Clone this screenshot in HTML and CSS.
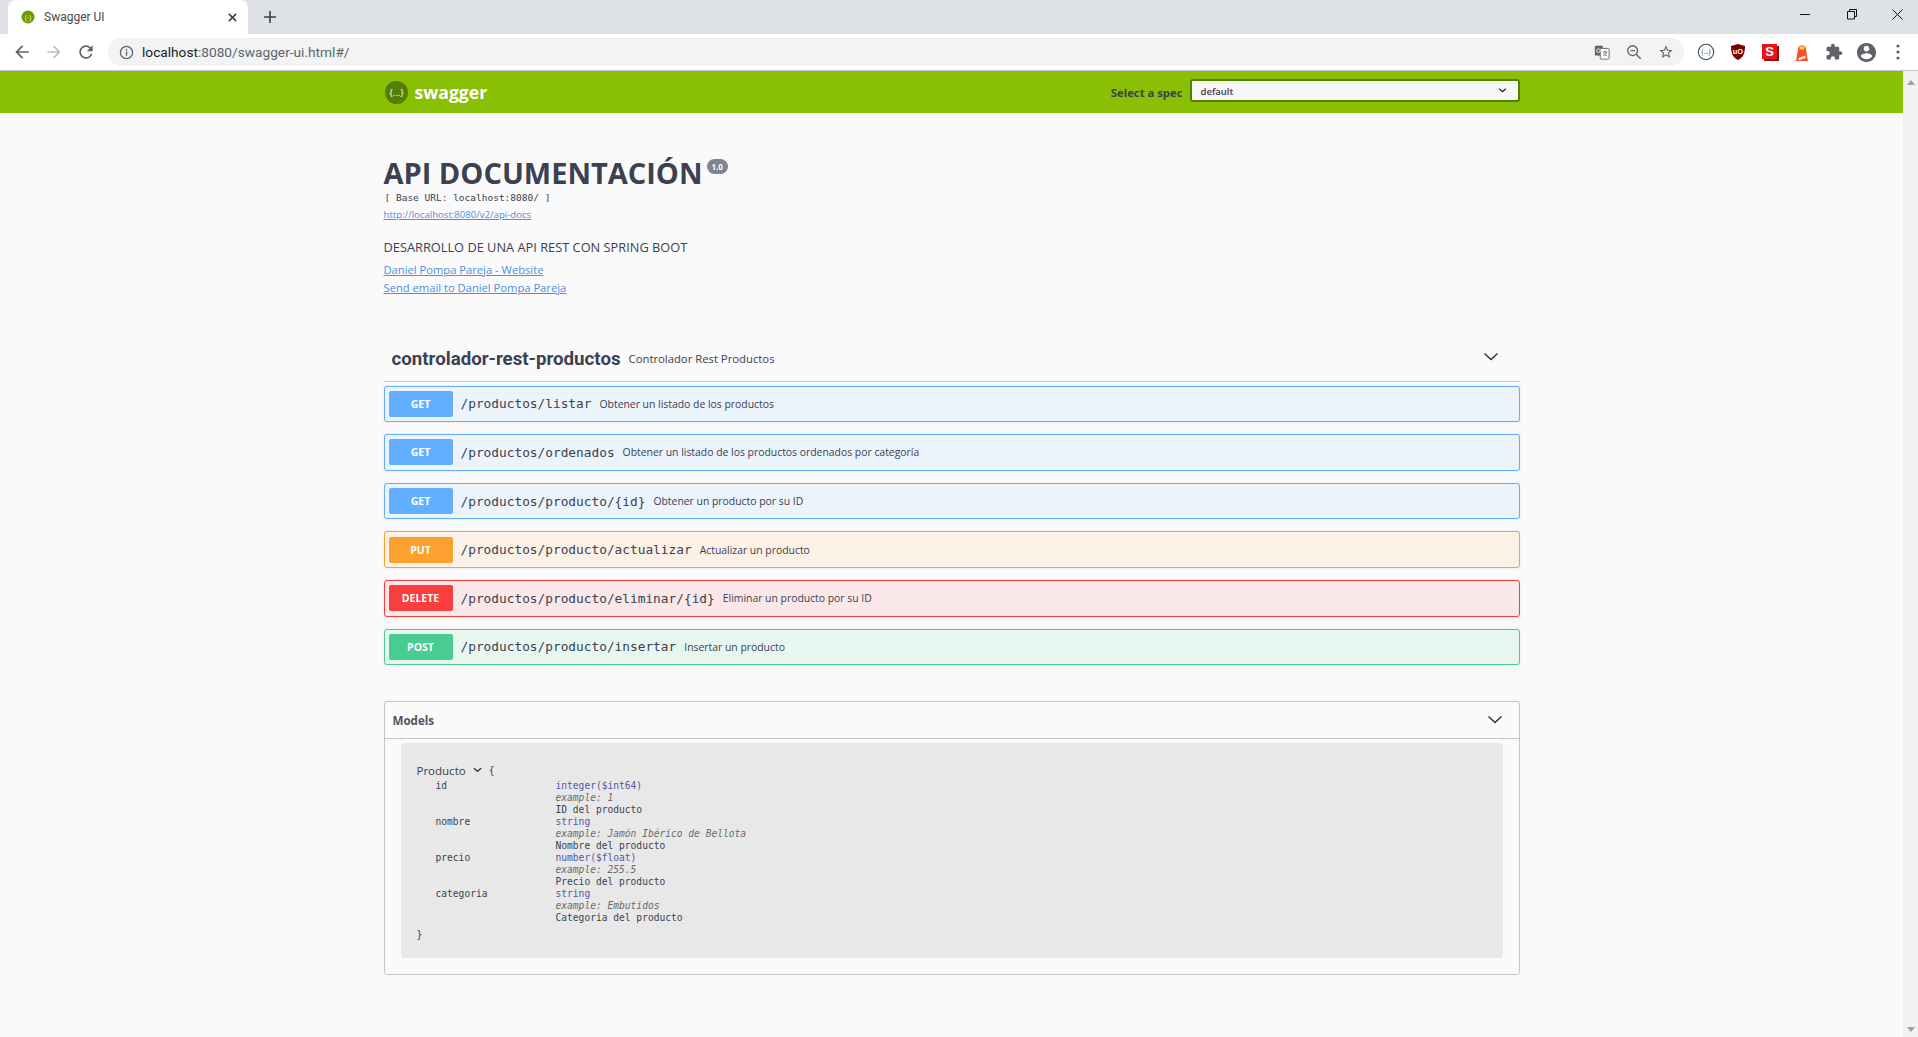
FILE: index.html
```html
<!DOCTYPE html>
<html lang="es">
<head>
<meta charset="utf-8">
<title>Swagger UI</title>
<link rel="stylesheet" href="styles.css">
</head>
<body>
<header class="browser">
  <div class="tabstrip">
    <div class="tab">
      <svg class="favicon" viewBox="0 0 14 14"><circle cx="7" cy="7" r="6.5" fill="#6d9a04"/><text x="7" y="9.500" class="favicon-text">{·}</text></svg>
      <span class="tab-title">Swagger UI</span>
      <svg class="tab-close" viewBox="0 0 10 10"><path d="M1 1l8 8M9 1l-8 8" stroke="#3c4043" stroke-width="1.7" fill="none"/></svg>
    </div>
    <svg class="tab-new" viewBox="0 0 12 12"><path d="M6 0v12M0 6h12" stroke="#3c4043" stroke-width="1.6" fill="none"/></svg>
    <div class="win-controls">
      <svg class="win-btn" viewBox="0 0 46 16"><path d="M18 8.5h10" stroke="#111" fill="none"/></svg>
      <svg class="win-btn" viewBox="0 0 46 16"><path d="M19.5 5.5h7v7.500h-7zM21.500 5.500v-2h7v7h-2" stroke="#111" fill="none"/></svg>
      <svg class="win-btn" viewBox="0 0 46 16"><path d="M18.500 3.500l10 10M28.500 3.500l-10 10" stroke="#111" fill="none"/></svg>
    </div>
  </div>
  <div class="toolbar">
    <svg class="nav-icon" viewBox="0 0 24 24"><path fill="#5f6368" d="M20 11H7.830l5.590-5.590L12 4l-8 8 8 8 1.410-1.410L7.830 13H20v-2z"/></svg>
    <svg class="nav-icon" viewBox="0 0 24 24"><path fill="#bcc0c4" d="M4 11h12.170l-5.590-5.590L12 4l8 8-8 8-1.410-1.410L16.170 13H4v-2z"/></svg>
    <svg class="nav-icon" viewBox="0 0 24 24"><path fill="#5f6368" d="M17.650 6.350A7.958 7.958 0 0012 4c-4.420 0-7.990 3.580-7.990 8s3.570 8 7.990 8c3.730 0 6.840-2.550 7.730-6h-2.080A5.990 5.990 0 0112 18c-3.310 0-6-2.690-6-6s2.690-6 6-6c1.660 0 3.140.690 4.220 1.780L13 11h7V4l-2.350 2.350z"/></svg>
    <div class="omnibox">
      <svg class="info-icon" viewBox="0 0 16 16"><circle cx="8" cy="8" r="6.500" fill="none" stroke="#5f6368" stroke-width="1.400"/><path d="M8 7v4.500M8 4.300v1.500" stroke="#5f6368" stroke-width="1.500" fill="none"/></svg>
      <span class="url"><span class="url-host">localhost</span>:8080/swagger-ui.html#/</span>
      <div class="omni-actions">
        <svg class="omni-icon" viewBox="0 0 18 18"><rect x="1" y="2" width="9" height="11" rx="1" fill="#5f6368"/><rect x="7" y="5" width="10" height="12" rx="1" fill="#fff" stroke="#5f6368"/><circle cx="5" cy="7.500" r="2" fill="none" stroke="#fff"/><path d="M10 9h5M12.500 8v1M14 9c-.5 2-2 3.500-3.500 4M11 10.500c.8 1.300 2 2.200 3.500 2.800" stroke="#5f6368" fill="none"/></svg>
        <svg class="omni-icon" viewBox="0 0 18 18"><circle cx="7.500" cy="7.500" r="5.500" fill="none" stroke="#5f6368" stroke-width="1.500"/><path d="M5 7.500h5M11.500 11.500l5 5" stroke="#5f6368" stroke-width="1.500" fill="none"/></svg>
        <svg class="omni-icon" viewBox="0 0 24 24"><path fill="#5f6368" d="M22 9.240l-7.190-.62L12 2 9.190 8.630 2 9.240l5.460 4.730L5.820 21 12 17.270 18.180 21l-1.630-7.030L22 9.240zM12 15.400l-3.760 2.270 1-4.280-3.320-2.880 4.380-.38L12 6.100l1.710 4.040 4.380.38-3.320 2.880 1 4.280L12 15.400z"/></svg>
      </div>
    </div>
    <div class="extensions">
      <svg class="ext-icon" viewBox="0 0 18 18"><circle cx="9" cy="9" r="7.700" fill="#fff" stroke="#4a4a4a" stroke-width="1.100"/><text x="9" y="11.300" class="ext-swagger-text">{...}</text></svg>
      <svg class="ext-icon" viewBox="0 0 18 18"><path d="M9 1l7 2c0 7-1.500 11.500-7 14C3.500 14.500 2 10 2 3z" fill="#800000"/><text x="9" y="11" class="ext-ub-text">uO</text></svg>
      <svg class="ext-icon" viewBox="0 0 18 18"><rect x="3" y="3" width="15" height="15" fill="#8e0f12"/><rect x="1" y="1" width="15" height="15" fill="#e8141c"/><text x="8.500" y="13" class="ext-s-text">S</text></svg>
      <svg class="ext-icon" viewBox="0 0 14 18"><path d="M3 7h8l2 11H1z" fill="#f4502a"/><path d="M2.500 7a4.500 4.500 0 019 0z" fill="#f4502a"/><rect x="4.500" y="3.500" width="5" height="3" fill="#fbd04a"/><path d="M3.500 15l7-2.500v2.500l-7 2.500z" fill="#fde3d8"/></svg>
      <svg class="ext-icon" viewBox="0 0 24 24"><path fill="#5f6368" d="M20.500 11H19V7c0-1.100-.9-2-2-2h-4V3.500C13 2.120 11.880 1 10.500 1S8 2.120 8 3.500V5H4c-1.100 0-1.990.9-1.990 2v3.800H3.500c1.490 0 2.700 1.210 2.700 2.700s-1.210 2.700-2.700 2.700H2V20c0 1.100.9 2 2 2h3.800v-1.500c0-1.490 1.210-2.700 2.700-2.700 1.490 0 2.700 1.210 2.700 2.700V22H17c1.100 0 2-.9 2-2v-4h1.500c1.380 0 2.500-1.120 2.500-2.500S21.880 11 20.500 11z"/></svg>
      <svg class="ext-icon ext-large" viewBox="2 2 20 20"><path fill="#5f6368" d="M12 2C6.480 2 2 6.480 2 12s4.480 10 10 10 10-4.480 10-10S17.520 2 12 2zm0 3c1.660 0 3 1.340 3 3s-1.340 3-3 3-3-1.340-3-3 1.340-3 3-3zm0 14.200c-2.500 0-4.710-1.280-6-3.220.03-1.990 4-3.080 6-3.080 1.990 0 5.970 1.090 6 3.080-1.290 1.940-3.500 3.220-6 3.220z"/></svg>
      <svg class="ext-icon" viewBox="0 0 18 18"><circle cx="9" cy="3" r="1.600" fill="#5f6368"/><circle cx="9" cy="9" r="1.600" fill="#5f6368"/><circle cx="9" cy="15" r="1.600" fill="#5f6368"/></svg>
    </div>
  </div>
</header>

<div class="viewport">
  <main class="page">
    <div class="topbar">
      <div class="wrap topbar-inner">
        <a class="logo">
          <svg class="logo-mark" viewBox="0 0 23 23"><circle cx="11.500" cy="11.500" r="11.500" fill="#547f00"/><text x="11.500" y="14.800" class="logo-mark-text">{...}</text></svg>
          <span class="logo-text">swagger</span>
        </a>
        <label class="spec-label">Select a spec</label>
        <div class="spec-select">
          <span>default</span>
          <svg class="spec-chevron" viewBox="0 0 10 6"><path d="M1 1l4 3.500L9 1" fill="none" stroke="#222" stroke-width="1.500"/></svg>
        </div>
      </div>
    </div>

    <div class="wrap">
      <section class="info">
        <h1 class="title">API DOCUMENTACIÓN<span class="version">1.0</span></h1>
        <p class="base-url">[ Base URL: localhost:8080/ ]</p>
        <a class="spec-link">http://localhost:8080/v2/api-docs</a>
        <p class="description">DESARROLLO DE UNA API REST CON SPRING BOOT</p>
        <a class="contact-link">Daniel Pompa Pareja - Website</a>
        <a class="contact-link">Send email to Daniel Pompa Pareja</a>
      </section>

      <section class="tag-section">
        <div class="tag-header">
          <span class="tag-name">controlador-rest-productos</span>
          <span class="tag-desc">Controlador Rest Productos</span>
          <svg class="tag-chevron" viewBox="0 0 14 8"><path d="M.5.500L7 6.500 13.500.500" fill="none" stroke="#303030" stroke-width="1.400"/></svg>
        </div>
        <div class="ops">
          <div class="op op-get"><span class="method">GET</span><span class="path">/productos/listar</span><span class="op-desc">Obtener un listado de los productos</span></div>
          <div class="op op-get"><span class="method">GET</span><span class="path">/productos/ordenados</span><span class="op-desc">Obtener un listado de los productos ordenados por categoría</span></div>
          <div class="op op-get"><span class="method">GET</span><span class="path">/productos/producto/{id}</span><span class="op-desc">Obtener un producto por su ID</span></div>
          <div class="op op-put"><span class="method">PUT</span><span class="path">/productos/producto/actualizar</span><span class="op-desc">Actualizar un producto</span></div>
          <div class="op op-delete"><span class="method">DELETE</span><span class="path">/productos/producto/eliminar/{id}</span><span class="op-desc">Eliminar un producto por su ID</span></div>
          <div class="op op-post"><span class="method">POST</span><span class="path">/productos/producto/insertar</span><span class="op-desc">Insertar un producto</span></div>
        </div>
      </section>

      <section class="models">
        <div class="models-header">
          <span class="models-title">Models</span>
          <svg class="models-chevron" viewBox="0 0 14 8"><path d="M.5.500L7 6.500 13.500.500" fill="none" stroke="#303030" stroke-width="1.400"/></svg>
        </div>
        <div class="model-box">
          <div class="model-head"><span class="model-name">Producto</span><svg class="model-chevron" viewBox="0 0 10 6"><path d="M1 1l4 3.500L9 1" fill="none" stroke="#333" stroke-width="1.500"/></svg><span class="brace">{</span></div>
          <div class="props">
            <div class="prop-name">id</div>
            <div class="prop-info"><div class="type">integer($int64)</div><div class="example">example: 1</div><div class="pdesc">ID del producto</div></div>
            <div class="prop-name">nombre</div>
            <div class="prop-info"><div class="type">string</div><div class="example">example: Jamón Ibérico de Bellota</div><div class="pdesc">Nombre del producto</div></div>
            <div class="prop-name">precio</div>
            <div class="prop-info"><div class="type">number($float)</div><div class="example">example: 255.5</div><div class="pdesc">Precio del producto</div></div>
            <div class="prop-name">categoria</div>
            <div class="prop-info"><div class="type">string</div><div class="example">example: Embutidos</div><div class="pdesc">Categoria del producto</div></div>
          </div>
          <div class="brace brace-end">}</div>
        </div>
      </section>
    </div>
  </main>
  <aside class="scrollbar">
    <span class="arrow-up"></span>
    <span class="arrow-down"></span>
  </aside>
</div>
</body>
</html>
```
FILE: styles.css
```css
* { box-sizing: border-box; }
html, body { margin: 0; height: 1037px; overflow: hidden; }
body { font-family: "Open Sans", sans-serif; background: #fafafa; color: #3b4151; }
p, h1 { margin: 0; }

/* browser chrome */
.browser { height: 71px; background: #fff; border-bottom: 1px solid #c6c8ca; }
.tabstrip { height: 34px; background: #dee1e6; display: flex; align-items: center; padding-left: 8px; }
.tab { width: 240px; height: 34px; background: #fff; border-radius: 8px 8px 0 0; display: flex; align-items: center; padding: 0 11px 0 13px; }
.favicon { width: 14px; height: 14px; }
.favicon-text { font: 7px "Open Sans", sans-serif; fill: #e6eec9; text-anchor: middle; }
.tab-title { font: 12px "Roboto", sans-serif; color: #45494d; margin-left: 9px; flex: 1; }
.tab-close { width: 9px; height: 9px; }
.tab-new { width: 12px; height: 12px; margin-left: 16px; }
.win-controls { margin-left: auto; display: flex; margin-right: -2px; }
.win-btn { width: 46px; height: 16px; display: block; margin-top: -6px; }
.toolbar { height: 36px; display: flex; align-items: center; padding-left: 12px; }
.nav-icon { width: 20px; height: 20px; margin-right: 12px; flex: none; }
.nav-icon:nth-of-type(3) { margin-right: 0; }
.omnibox { width: 1576px; height: 28px; margin-left: 12px; background: #f1f3f4; border-radius: 14px; display: flex; align-items: center; padding-left: 11px; }
.info-icon { width: 15px; height: 15px; }
.url { font: 13.700px "Roboto", sans-serif; color: #5f6368; margin-left: 8px; }
.url-host { color: #202124; }
.omni-actions { margin-left: auto; display: flex; gap: 16px; padding-right: 10px; }
.omni-icon { width: 16px; height: 16px; display: block; }
.extensions { display: flex; align-items: center; margin-left: 13px; gap: 14px; }
.ext-icon { width: 18px; height: 18px; display: block; flex: none; }
.ext-large { width: 19px; height: 19px; margin: 0 -.5px; }
.ext-swagger-text { font: 6.500px "Open Sans", sans-serif; fill: #444; text-anchor: middle; }
.ext-ub-text { font: bold 7.500px "Liberation Sans", sans-serif; fill: #fff; text-anchor: middle; }
.ext-s-text { font: bold 13px "Liberation Sans", sans-serif; fill: #fff; text-anchor: middle; }

/* page */
.viewport { display: flex; height: 966px; }
.page { flex: 1; min-width: 0; background: #fafafa; overflow: hidden; }
.scrollbar { width: 15px; background: #f1f1f1; display: flex; flex-direction: column; justify-content: space-between; align-items: center; padding: 9px 0 5px; }
.arrow-up { border: 4px solid transparent; border-top: 0; border-bottom: 5px solid #a3a3a3; }
.arrow-down { border: 4px solid transparent; border-bottom: 0; border-top: 5px solid #a3a3a3; }
.wrap { width: 1136px; margin: 0 auto; }

/* top bar */
.topbar { height: 42px; background: #89bf04; }
.topbar-inner { display: flex; align-items: center; height: 100%; padding-left: 1px; }
.logo { display: flex; align-items: center; }
.logo-mark { width: 23px; height: 23px; }
.logo-mark-text { font: 9.500px "Open Sans", sans-serif; fill: #fff; text-anchor: middle; }
.logo-text { font: 700 17.600px "Open Sans", sans-serif; color: #fff; margin-left: 7px; }
.spec-label { font: 700 11.300px "Open Sans", sans-serif; color: #3b4151; margin-left: auto; margin-right: 7px; }
.spec-select { width: 330px; height: 23px; background: #f7f7f7; border: 2px solid #547f00; border-radius: 3px; font: 600 9.500px "Open Sans", sans-serif; color: #3b4151; display: flex; align-items: center; justify-content: space-between; padding: 0 11px 0 9px; margin-top: -3px; }
.spec-select span { position: relative; top: 1px; }
.spec-chevron { width: 9px; height: 5px; }

/* info */
.info { padding-top: 42px; }
.title { font-size: 29px; line-height: 36px; font-weight: 700; color: #3b4151; display: flex; align-items: flex-start; }
.version { font-size: 8px; font-weight: 700; line-height: 15px; height: 15px; padding: 0 5px; margin: 4px 0 0 4px; background: #7d8492; color: #fff; border-radius: 8px; }
.base-url { font: 9.500px/12px "DejaVu Sans Mono", monospace; color: #3b4151; margin-top: 1px; padding-left: 1px; }
.spec-link { display: block; font-size: 9.600px; line-height: 13px; color: #4990e2; text-decoration: underline; margin-top: 4px; }
.description { font-size: 12.800px; line-height: 16px; margin-top: 18px; }
.contact-link { display: block; font-size: 11.200px; line-height: 18px; color: #4990e2; text-decoration: underline; }
.description + .contact-link { margin-top: 6px; }

/* tag */
.tag-section { margin-top: 48px; }
.tag-header { height: 37px; display: flex; align-items: center; padding: 0 0 8px 8px; border-bottom: 1px solid #c3c4c6; }
.tag-name { font: 700 18.700px "Roboto", sans-serif; color: #3b4151; }
.tag-desc { font-size: 11.300px; color: #3b4151; margin-left: 8px; margin-bottom: 1px; }
.tag-chevron { width: 14px; height: 8px; margin-left: auto; margin-right: 22px; margin-bottom: 5px; }
.ops { padding-top: 3.600px; display: flex; flex-direction: column; gap: 12px; }
.op { height: 36.600px; display: flex; align-items: center; border: 1px solid; border-radius: 3px; padding-left: 4px; box-shadow: 0 0 2px rgba(0,0,0,.12); }
.method { width: 64px; height: 26px; border-radius: 2px; color: #fff; font-size: 10.500px; font-weight: 700; text-align: center; line-height: 27px; flex: none; }
.path { font: 12.800px "DejaVu Sans Mono", monospace; color: #3b4151; margin-left: 8px; }
.op-desc { font-size: 10.400px; color: #3b4151; margin-left: 8px; }
.op-get { background: #ebf3fb; border-color: #61affe; }
.op-get .method { background: #61affe; }
.op-put { background: #fbf1e6; border-color: #fca130; }
.op-put .method { background: #fca130; }
.op-delete { background: #fae7e7; border-color: #f93e3e; }
.op-delete .method { background: #f93e3e; }
.op-post { background: #e8f6f0; border-color: #49cc90; }
.op-post .method { background: #49cc90; }

/* models */
.models { margin-top: 36px; height: 274px; border: 1px solid #c3c4c6; border-radius: 3px; }
.models-header { height: 37px; display: flex; align-items: center; justify-content: space-between; padding: 0 17px 0 8px; border-bottom: 1px solid #c3c4c6; }
.models-title { font-size: 11.600px; font-weight: 700; color: #505561; }
.models-chevron { width: 14px; height: 8px; }
.model-box { height: 215px; margin: 4px 16px 0; background: #e8e8e8; border-radius: 3px; padding: 19px 0 0 16px; }
.model-head { display: flex; align-items: center; height: 16px; }
.model-name { font-size: 11.500px; color: #3b4151; }
.model-chevron { width: 9px; height: 6px; margin: 0 7px; }
.brace { font: 9.600px "DejaVu Sans Mono", monospace; color: #3b4151; }
.props { display: grid; grid-template-columns: 120px 1fr; padding-left: 19px; font: 9.600px/12px "DejaVu Sans Mono", monospace; color: #3b4151; margin-top: 2px; }
.type { color: #55a; }
.example { font-style: italic; color: #6b6b6b; }
.pdesc { color: #3b4151; }
.brace-end { margin-top: 5px; line-height: 12px; }
```
